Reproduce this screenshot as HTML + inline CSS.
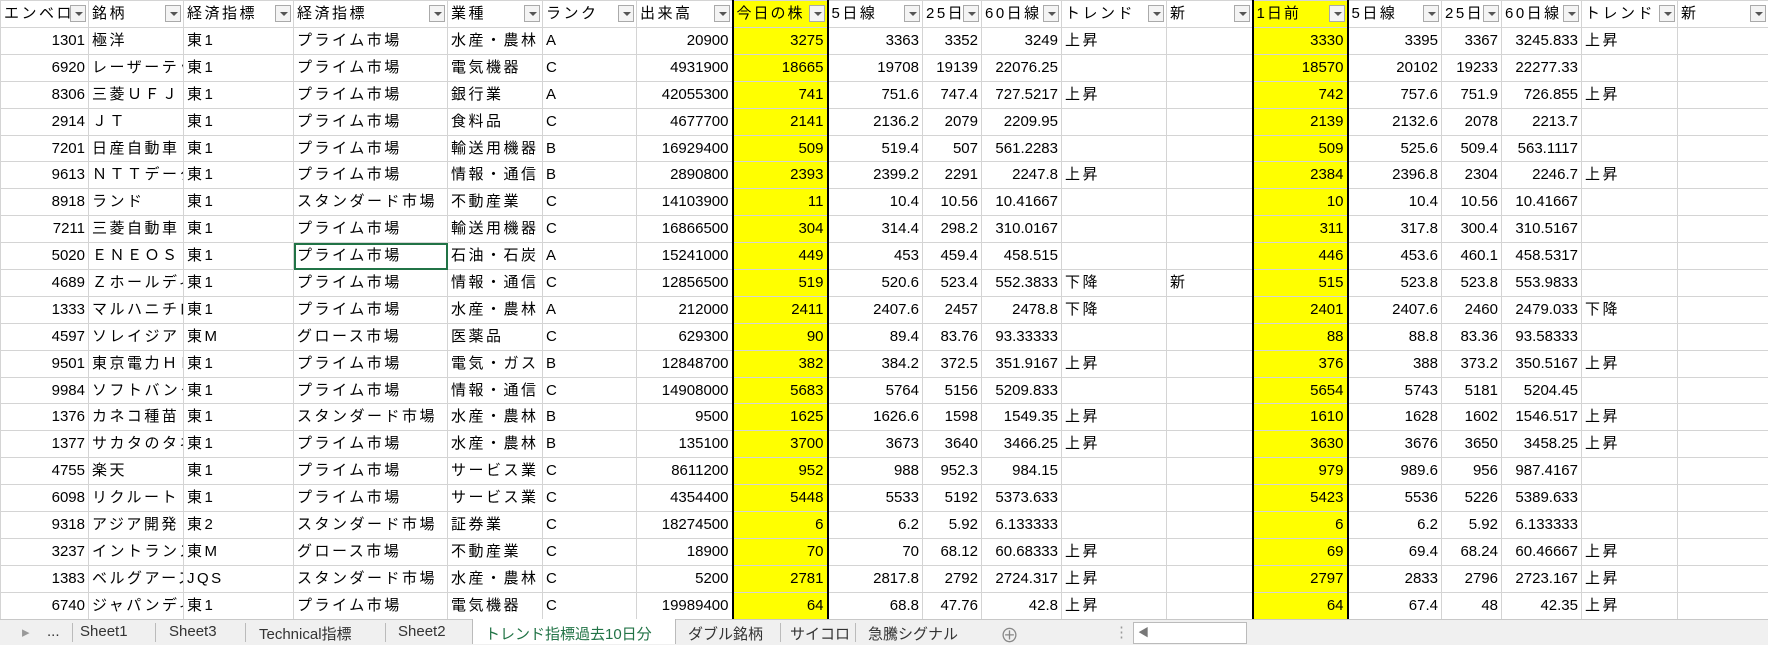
<!DOCTYPE html><html><head><meta charset="utf-8"><style>
body{margin:0;width:1768px;height:644px;overflow:hidden;background:#fff;font-family:"Liberation Sans","Noto Sans CJK JP",sans-serif;}
table{border-collapse:collapse;table-layout:fixed;width:1768px;position:absolute;left:0;top:0}
td{border:1px solid #d4d4d4;height:25.9px;padding:0 3px;font-size:15px;white-space:nowrap;overflow:hidden;line-height:24px;color:#000}
td:not(.r):not(.y){letter-spacing:2.5px}
tr:first-child td{height:26px;position:relative;padding-right:20px}
td.r{text-align:right}
td.y{background:#ffff00;text-align:right;border-left:2px solid #000;border-right:2px solid #000}
.dd{position:absolute;right:2px;top:4px;width:16px;height:17px;border:1px solid #aaa;background:#f4f4f4;box-sizing:border-box}
.dd:after{content:"";position:absolute;left:4px;top:6px;border-left:4px solid transparent;border-right:4px solid transparent;border-top:4px solid #555}
.sel{outline:2px solid #217346;outline-offset:-2px}
#tabs{position:absolute;left:0;top:619px;width:1768px;height:25px;background:#f0f0f0;border-top:1px solid #c8c8c8;font-size:15px;color:#333}
#tabs span{position:absolute;top:3px}
.sep{position:absolute;top:3px;width:1px;height:19px;background:#bbb}
</style></head><body>
<table>
<colgroup><col style="width:88px"><col style="width:95px"><col style="width:110px"><col style="width:154px"><col style="width:95px"><col style="width:94px"><col style="width:96px"><col style="width:95px"><col style="width:95px"><col style="width:59px"><col style="width:80px"><col style="width:105px"><col style="width:86px"><col style="width:95px"><col style="width:94px"><col style="width:60px"><col style="width:80px"><col style="width:96px"><col style="width:91px"></colgroup>
<tr><td>エンベロ<i class="dd"></i></td><td>銘柄<i class="dd"></i></td><td>経済指標<i class="dd"></i></td><td>経済指標<i class="dd"></i></td><td>業種<i class="dd"></i></td><td>ランク<i class="dd"></i></td><td>出来高<i class="dd"></i></td><td class="y" style="text-align:left;letter-spacing:2px">今日の株<i class="dd"></i></td><td>5日線<i class="dd"></i></td><td>25日<i class="dd"></i></td><td>60日線<i class="dd"></i></td><td>トレンド<i class="dd"></i></td><td>新<i class="dd"></i></td><td class="y" style="text-align:left;letter-spacing:2px">1日前<i class="dd"></i></td><td>5日線<i class="dd"></i></td><td>25日<i class="dd"></i></td><td>60日線<i class="dd"></i></td><td>トレンド<i class="dd"></i></td><td>新<i class="dd"></i></td></tr>
<tr><td class="r">1301</td><td>極洋</td><td>東1</td><td>プライム市場</td><td>水産・農林</td><td>A</td><td class="r">20900</td><td class="y">3275</td><td class="r">3363</td><td class="r">3352</td><td class="r">3249</td><td>上昇</td><td></td><td class="y">3330</td><td class="r">3395</td><td class="r">3367</td><td class="r">3245.833</td><td>上昇</td><td></td></tr>
<tr><td class="r">6920</td><td>レーザーテック</td><td>東1</td><td>プライム市場</td><td>電気機器</td><td>C</td><td class="r">4931900</td><td class="y">18665</td><td class="r">19708</td><td class="r">19139</td><td class="r">22076.25</td><td></td><td></td><td class="y">18570</td><td class="r">20102</td><td class="r">19233</td><td class="r">22277.33</td><td></td><td></td></tr>
<tr><td class="r">8306</td><td>三菱ＵＦＪ</td><td>東1</td><td>プライム市場</td><td>銀行業</td><td>A</td><td class="r">42055300</td><td class="y">741</td><td class="r">751.6</td><td class="r">747.4</td><td class="r">727.5217</td><td>上昇</td><td></td><td class="y">742</td><td class="r">757.6</td><td class="r">751.9</td><td class="r">726.855</td><td>上昇</td><td></td></tr>
<tr><td class="r">2914</td><td>ＪＴ</td><td>東1</td><td>プライム市場</td><td>食料品</td><td>C</td><td class="r">4677700</td><td class="y">2141</td><td class="r">2136.2</td><td class="r">2079</td><td class="r">2209.95</td><td></td><td></td><td class="y">2139</td><td class="r">2132.6</td><td class="r">2078</td><td class="r">2213.7</td><td></td><td></td></tr>
<tr><td class="r">7201</td><td>日産自動車</td><td>東1</td><td>プライム市場</td><td>輸送用機器</td><td>B</td><td class="r">16929400</td><td class="y">509</td><td class="r">519.4</td><td class="r">507</td><td class="r">561.2283</td><td></td><td></td><td class="y">509</td><td class="r">525.6</td><td class="r">509.4</td><td class="r">563.1117</td><td></td><td></td></tr>
<tr><td class="r">9613</td><td>ＮＴＴデータ</td><td>東1</td><td>プライム市場</td><td>情報・通信</td><td>B</td><td class="r">2890800</td><td class="y">2393</td><td class="r">2399.2</td><td class="r">2291</td><td class="r">2247.8</td><td>上昇</td><td></td><td class="y">2384</td><td class="r">2396.8</td><td class="r">2304</td><td class="r">2246.7</td><td>上昇</td><td></td></tr>
<tr><td class="r">8918</td><td>ランド</td><td>東1</td><td>スタンダード市場</td><td>不動産業</td><td>C</td><td class="r">14103900</td><td class="y">11</td><td class="r">10.4</td><td class="r">10.56</td><td class="r">10.41667</td><td></td><td></td><td class="y">10</td><td class="r">10.4</td><td class="r">10.56</td><td class="r">10.41667</td><td></td><td></td></tr>
<tr><td class="r">7211</td><td>三菱自動車</td><td>東1</td><td>プライム市場</td><td>輸送用機器</td><td>C</td><td class="r">16866500</td><td class="y">304</td><td class="r">314.4</td><td class="r">298.2</td><td class="r">310.0167</td><td></td><td></td><td class="y">311</td><td class="r">317.8</td><td class="r">300.4</td><td class="r">310.5167</td><td></td><td></td></tr>
<tr><td class="r">5020</td><td>ＥＮＥＯＳ</td><td>東1</td><td class="sel">プライム市場</td><td>石油・石炭</td><td>A</td><td class="r">15241000</td><td class="y">449</td><td class="r">453</td><td class="r">459.4</td><td class="r">458.515</td><td></td><td></td><td class="y">446</td><td class="r">453.6</td><td class="r">460.1</td><td class="r">458.5317</td><td></td><td></td></tr>
<tr><td class="r">4689</td><td>Ｚホールディ</td><td>東1</td><td>プライム市場</td><td>情報・通信</td><td>C</td><td class="r">12856500</td><td class="y">519</td><td class="r">520.6</td><td class="r">523.4</td><td class="r">552.3833</td><td>下降</td><td>新</td><td class="y">515</td><td class="r">523.8</td><td class="r">523.8</td><td class="r">553.9833</td><td></td><td></td></tr>
<tr><td class="r">1333</td><td>マルハニチロ</td><td>東1</td><td>プライム市場</td><td>水産・農林</td><td>A</td><td class="r">212000</td><td class="y">2411</td><td class="r">2407.6</td><td class="r">2457</td><td class="r">2478.8</td><td>下降</td><td></td><td class="y">2401</td><td class="r">2407.6</td><td class="r">2460</td><td class="r">2479.033</td><td>下降</td><td></td></tr>
<tr><td class="r">4597</td><td>ソレイジア</td><td>東M</td><td>グロース市場</td><td>医薬品</td><td>C</td><td class="r">629300</td><td class="y">90</td><td class="r">89.4</td><td class="r">83.76</td><td class="r">93.33333</td><td></td><td></td><td class="y">88</td><td class="r">88.8</td><td class="r">83.36</td><td class="r">93.58333</td><td></td><td></td></tr>
<tr><td class="r">9501</td><td>東京電力ＨＤ</td><td>東1</td><td>プライム市場</td><td>電気・ガス</td><td>B</td><td class="r">12848700</td><td class="y">382</td><td class="r">384.2</td><td class="r">372.5</td><td class="r">351.9167</td><td>上昇</td><td></td><td class="y">376</td><td class="r">388</td><td class="r">373.2</td><td class="r">350.5167</td><td>上昇</td><td></td></tr>
<tr><td class="r">9984</td><td>ソフトバンク</td><td>東1</td><td>プライム市場</td><td>情報・通信</td><td>C</td><td class="r">14908000</td><td class="y">5683</td><td class="r">5764</td><td class="r">5156</td><td class="r">5209.833</td><td></td><td></td><td class="y">5654</td><td class="r">5743</td><td class="r">5181</td><td class="r">5204.45</td><td></td><td></td></tr>
<tr><td class="r">1376</td><td>カネコ種苗</td><td>東1</td><td>スタンダード市場</td><td>水産・農林</td><td>B</td><td class="r">9500</td><td class="y">1625</td><td class="r">1626.6</td><td class="r">1598</td><td class="r">1549.35</td><td>上昇</td><td></td><td class="y">1610</td><td class="r">1628</td><td class="r">1602</td><td class="r">1546.517</td><td>上昇</td><td></td></tr>
<tr><td class="r">1377</td><td>サカタのタネ</td><td>東1</td><td>プライム市場</td><td>水産・農林</td><td>B</td><td class="r">135100</td><td class="y">3700</td><td class="r">3673</td><td class="r">3640</td><td class="r">3466.25</td><td>上昇</td><td></td><td class="y">3630</td><td class="r">3676</td><td class="r">3650</td><td class="r">3458.25</td><td>上昇</td><td></td></tr>
<tr><td class="r">4755</td><td>楽天</td><td>東1</td><td>プライム市場</td><td>サービス業</td><td>C</td><td class="r">8611200</td><td class="y">952</td><td class="r">988</td><td class="r">952.3</td><td class="r">984.15</td><td></td><td></td><td class="y">979</td><td class="r">989.6</td><td class="r">956</td><td class="r">987.4167</td><td></td><td></td></tr>
<tr><td class="r">6098</td><td>リクルート</td><td>東1</td><td>プライム市場</td><td>サービス業</td><td>C</td><td class="r">4354400</td><td class="y">5448</td><td class="r">5533</td><td class="r">5192</td><td class="r">5373.633</td><td></td><td></td><td class="y">5423</td><td class="r">5536</td><td class="r">5226</td><td class="r">5389.633</td><td></td><td></td></tr>
<tr><td class="r">9318</td><td>アジア開発</td><td>東2</td><td>スタンダード市場</td><td>証券業</td><td>C</td><td class="r">18274500</td><td class="y">6</td><td class="r">6.2</td><td class="r">5.92</td><td class="r">6.133333</td><td></td><td></td><td class="y">6</td><td class="r">6.2</td><td class="r">5.92</td><td class="r">6.133333</td><td></td><td></td></tr>
<tr><td class="r">3237</td><td>イントランス</td><td>東M</td><td>グロース市場</td><td>不動産業</td><td>C</td><td class="r">18900</td><td class="y">70</td><td class="r">70</td><td class="r">68.12</td><td class="r">60.68333</td><td>上昇</td><td></td><td class="y">69</td><td class="r">69.4</td><td class="r">68.24</td><td class="r">60.46667</td><td>上昇</td><td></td></tr>
<tr><td class="r">1383</td><td>ベルグアース</td><td>JQS</td><td>スタンダード市場</td><td>水産・農林</td><td>C</td><td class="r">5200</td><td class="y">2781</td><td class="r">2817.8</td><td class="r">2792</td><td class="r">2724.317</td><td>上昇</td><td></td><td class="y">2797</td><td class="r">2833</td><td class="r">2796</td><td class="r">2723.167</td><td>上昇</td><td></td></tr>
<tr><td class="r">6740</td><td>ジャパンディ</td><td>東1</td><td>プライム市場</td><td>電気機器</td><td>C</td><td class="r">19989400</td><td class="y">64</td><td class="r">68.8</td><td class="r">47.76</td><td class="r">42.8</td><td>上昇</td><td></td><td class="y">64</td><td class="r">67.4</td><td class="r">48</td><td class="r">42.35</td><td>上昇</td><td></td></tr>
</table>
<div id="tabs">
<span style="left:22px;color:#999">▸</span><span style="left:47px">...</span><div class="sep" style="left:72px"></div>
<span style="left:80px">Sheet1</span><div class="sep" style="left:155px"></div>
<span style="left:169px">Sheet3</span><div class="sep" style="left:245px"></div>
<span style="left:259px">Technical指標</span><div class="sep" style="left:385px"></div>
<span style="left:398px">Sheet2</span>
<div style="position:absolute;left:472px;top:-1px;width:202px;height:25px;background:#fff;border-left:1px solid #bbb;border-right:1px solid #bbb"></div>
<span style="left:485px;color:#217346">トレンド指標過去10日分</span>
<span style="left:688px">ダブル銘柄</span><div class="sep" style="left:780px"></div>
<span style="left:790px">サイコロ</span><div class="sep" style="left:855px"></div>
<span style="left:868px">急騰シグナル</span>
<span style="left:1000px;top:1px;font-size:19px;color:#888">⊕</span>
<span style="left:1114px;color:#999">⋮</span>
<div style="position:absolute;left:1133px;top:2px;width:112px;height:20px;background:#fff;border:1px solid #bbb"></div>
<span style="left:1138px;top:4px;font-size:11px;color:#777">◀</span>
</div>
</body></html>
